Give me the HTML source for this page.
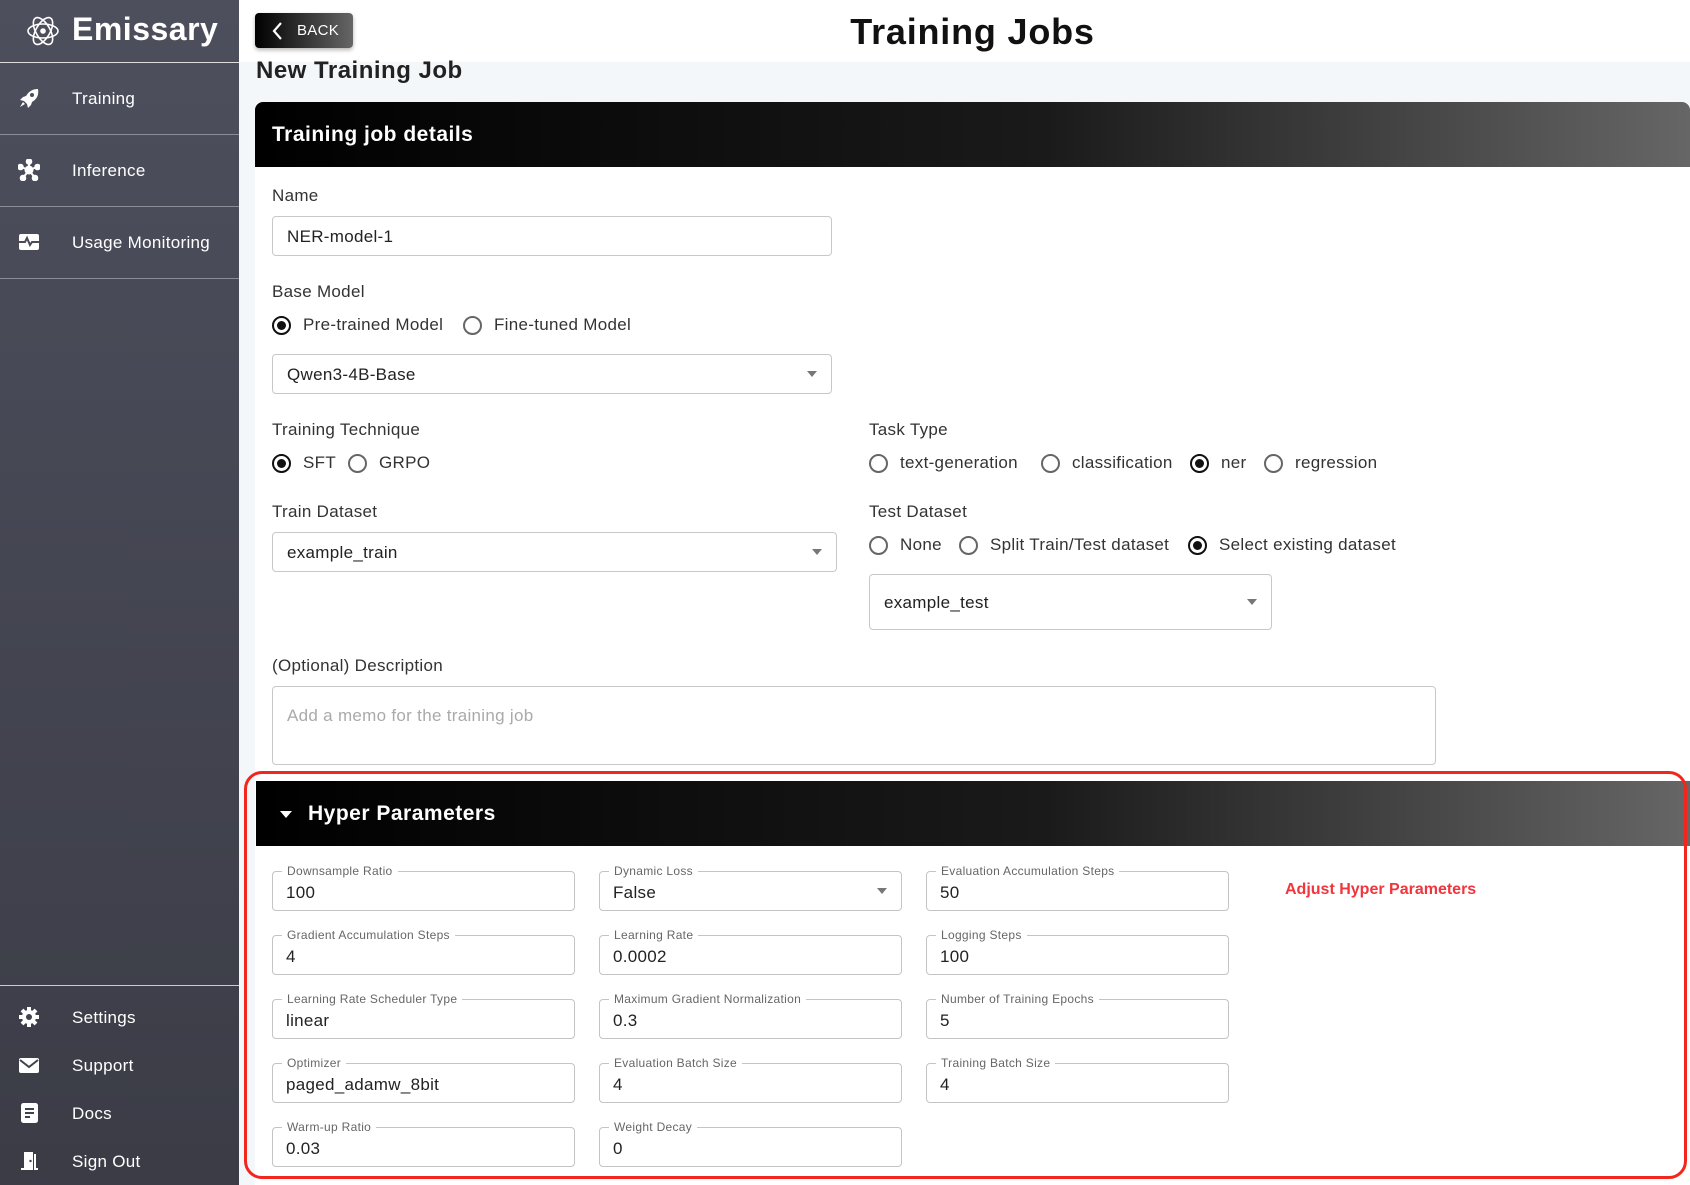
<!DOCTYPE html>
<html><head><meta charset="utf-8"><style>
*{box-sizing:border-box;margin:0;padding:0}
body{width:1690px;height:1185px;overflow:hidden;font-family:"Liberation Sans",sans-serif;background:#f4f7fa;position:relative;color:#222;letter-spacing:.3px}
.a{position:absolute}
#sb{left:0;top:0;width:239px;height:1185px;background:linear-gradient(#4d4f5d,#3b3c46)}
.nav{position:absolute;left:72px;color:#fff;font-size:17px;transform:translateY(-50%);margin-top:1px}
.ic{position:absolute;left:18px;width:22px;height:22px;transform:translateY(-50%)}
.hr{position:absolute;left:0;width:239px;height:1px;background:#8a8c96}
.lbl{position:absolute;font-size:17px;color:#333;transform:translateY(-50%);margin-top:1px}
.in{position:absolute;border:1px solid #c8c8c8;border-radius:4px;background:#fff;font-size:17px;color:#222;padding-left:14px;padding-top:2px;display:flex;align-items:center}
.caret{position:absolute;right:14px;top:50%;margin-top:-3px;border-left:5px solid transparent;border-right:5px solid transparent;border-top:6px solid #777}
.r{position:absolute;transform:translateY(-50%);margin-top:1px;display:flex;align-items:center;font-size:17px;color:#333;white-space:nowrap}
.rb{width:19px;height:19px;border:2px solid #666;border-radius:50%;margin-right:12px;position:relative;background:#fff}
.rb.on{border-color:#111}
.rb.on::after{content:"";position:absolute;left:3px;top:3px;width:9px;height:9px;border-radius:50%;background:#111}
.hf{position:absolute;width:303px;height:40px;border:1px solid #c4c4c4;border-radius:4px;background:#fff}
.hf span{position:absolute;left:9px;top:-8px;background:#fff;padding:0 5px;font-size:12px;color:#666;line-height:14px}
.hf b{position:absolute;left:13px;top:11px;font-weight:normal;font-size:17px;color:#222}
</style></head><body>
<div class="a" id="sb"></div>
<svg class="a" style="left:26px;top:14px" width="34" height="34" viewBox="0 0 34 34" fill="none" stroke="#fff" stroke-width="1.6"><ellipse cx="17" cy="17" rx="15" ry="7"/><ellipse cx="17" cy="17" rx="15" ry="7" transform="rotate(60 17 17)"/><ellipse cx="17" cy="17" rx="15" ry="7" transform="rotate(120 17 17)"/><circle cx="17" cy="17" r="2" fill="#fff"/></svg>
<div class="a" style="left:72px;top:11px;color:#fff;font-size:32px;font-weight:bold;letter-spacing:.5px">Emissary</div>
<div class="hr" style="top:62px;background:#ddd"></div>
<svg class="ic" style="top:98px" viewBox="0 0 22 22" fill="#fff"><path d="M20 2c-5 0-9 2-12 7l-3 1-3 3 4 1 3 3 1 4 3-3 1-3c5-3 7-7 6-13zM14 6a2 2 0 1 1 0 4 2 2 0 0 1 0-4zM5 15l-3 5 5-3z"/></svg>
<div class="nav" style="top:98px">Training</div>
<div class="hr" style="top:134px"></div>
<svg class="ic" style="top:170px" viewBox="0 0 22 22" fill="#fff" stroke="#fff" stroke-width="2"><circle cx="11" cy="11" r="3.5"/><circle cx="11" cy="2.5" r="2.3"/><circle cx="2.5" cy="8" r="2.3"/><circle cx="19.5" cy="8" r="2.3"/><circle cx="5" cy="19" r="2.3"/><circle cx="17" cy="19" r="2.3"/><path d="M11 11V3M11 11L3 8M11 11l8-3M11 11l-6 8M11 11l6 8"/></svg>
<div class="nav" style="top:170px">Inference</div>
<div class="hr" style="top:206px"></div>
<svg class="ic" style="top:242px" viewBox="0 0 22 22"><rect x="1" y="3" width="20" height="16" rx="2" fill="#fff"/><path d="M1 11h6l2-4 3 7 2-3h7" stroke="#4a4c59" stroke-width="2" fill="none"/></svg>
<div class="nav" style="top:242px">Usage Monitoring</div>
<div class="hr" style="top:278px"></div>
<div class="hr" style="top:985px;background:#ccc"></div>
<svg class="ic" style="top:1017px" viewBox="0 0 22 22"><circle cx="11" cy="11" r="7" fill="#fff"/><g stroke="#fff" stroke-width="4"><path d="M11 1v20M1 11h20M4 4l14 14M18 4L4 18"/></g><circle cx="11" cy="11" r="3" fill="#41424d"/></svg>
<div class="nav" style="top:1017px">Settings</div>
<svg class="ic" style="top:1065px" viewBox="0 0 22 22"><rect x="1" y="4" width="20" height="15" rx="2" fill="#fff"/><path d="M2 6l9 7 9-7" stroke="#41424d" stroke-width="2" fill="none"/></svg>
<div class="nav" style="top:1065px">Support</div>
<svg class="ic" style="top:1113px" viewBox="0 0 22 22"><rect x="3" y="1" width="17" height="20" rx="2.5" fill="#fff"/><path d="M7 7h9M7 11h9M7 15h5" stroke="#40414b" stroke-width="2"/></svg>
<div class="nav" style="top:1113px">Docs</div>
<svg class="ic" style="top:1161px" viewBox="0 0 22 22" fill="#fff"><rect x="6" y="2" width="9" height="18"/><rect x="16" y="4" width="2" height="16"/><rect x="16" y="18" width="4" height="2"/><rect x="3" y="18" width="4" height="2"/><circle cx="12.5" cy="11" r="1.2" fill="#3d3e48"/></svg>
<div class="nav" style="top:1161px">Sign Out</div>

<div class="a" style="left:239px;top:0;width:1451px;height:62px;background:#fff"></div>
<div class="a" style="left:255px;top:13px;width:98px;height:35px;border-radius:4px;background:linear-gradient(90deg,#000,#666);box-shadow:0 2px 4px rgba(0,0,0,.3);color:#fff;font-size:15px;display:flex;align-items:center;padding-left:42px">BACK</div>
<svg class="a" style="left:272px;top:21px" width="12" height="20" viewBox="0 0 12 20"><path d="M9 2L2 10l7 8" stroke="#fff" stroke-width="2.2" fill="none"/></svg>
<div class="a" style="left:0;width:1945px;top:11px;text-align:center;font-size:36px;font-weight:bold;color:#111;letter-spacing:.8px">Training Jobs</div>
<div class="a" style="left:256px;top:57px;font-size:24px;font-weight:bold;color:#222;letter-spacing:.5px">New Training Job</div>

<div class="a" style="left:255px;top:102px;width:1435px;height:1083px;background:#fff;border-radius:6px 6px 0 0"></div>
<div class="a" style="left:255px;top:102px;width:1435px;height:65px;border-radius:8px 8px 0 0;background:linear-gradient(90deg,#000 0%,#1a1a1a 55%,#666 100%)"></div>
<div class="a" style="left:272px;top:123px;color:#fff;font-size:21px;font-weight:bold;letter-spacing:.5px">Training job details</div>

<div class="lbl" style="left:272px;top:195px">Name</div>
<div class="in" style="left:272px;top:216px;width:560px;height:40px">NER-model-1</div>
<div class="lbl" style="left:272px;top:291px">Base Model</div>
<div class="r" style="left:272px;top:324px"><i class="rb on"></i>Pre-trained Model</div>
<div class="r" style="left:463px;top:324px"><i class="rb"></i>Fine-tuned Model</div>
<div class="in" style="left:272px;top:354px;width:560px;height:40px">Qwen3-4B-Base<i class="caret"></i></div>

<div class="lbl" style="left:272px;top:429px">Training Technique</div>
<div class="r" style="left:272px;top:462px"><i class="rb on"></i>SFT</div>
<div class="r" style="left:348px;top:462px"><i class="rb"></i>GRPO</div>
<div class="lbl" style="left:869px;top:429px">Task Type</div>
<div class="r" style="left:869px;top:462px"><i class="rb"></i>text-generation</div>
<div class="r" style="left:1041px;top:462px"><i class="rb"></i>classification</div>
<div class="r" style="left:1190px;top:462px"><i class="rb on"></i>ner</div>
<div class="r" style="left:1264px;top:462px"><i class="rb"></i>regression</div>

<div class="lbl" style="left:272px;top:511px">Train Dataset</div>
<div class="in" style="left:272px;top:532px;width:565px;height:40px">example_train<i class="caret"></i></div>
<div class="lbl" style="left:869px;top:511px">Test Dataset</div>
<div class="r" style="left:869px;top:544px"><i class="rb"></i>None</div>
<div class="r" style="left:959px;top:544px"><i class="rb"></i>Split Train/Test dataset</div>
<div class="r" style="left:1188px;top:544px"><i class="rb on"></i>Select existing dataset</div>
<div class="in" style="left:869px;top:574px;width:403px;height:56px">example_test<i class="caret"></i></div>

<div class="lbl" style="left:272px;top:665px">(Optional) Description</div>
<div class="in" style="left:272px;top:686px;width:1164px;height:79px;align-items:flex-start;padding-top:19px;color:#aaa">Add a memo for the training job</div>

<div class="a" style="left:256px;top:781px;width:1434px;height:65px;background:linear-gradient(90deg,#000 0%,#1a1a1a 55%,#666 100%)"></div>
<div class="a" style="left:280px;top:811px;border-left:6px solid transparent;border-right:6px solid transparent;border-top:7px solid #fff"></div>
<div class="a" style="left:308px;top:802px;color:#fff;font-size:21px;font-weight:bold;letter-spacing:.5px">Hyper Parameters</div>

<div class="hf" style="left:272px;top:871px"><span>Downsample Ratio</span><b>100</b></div>
<div class="hf" style="left:599px;top:871px"><span>Dynamic Loss</span><b>False</b><i class="caret"></i></div>
<div class="hf" style="left:926px;top:871px"><span>Evaluation Accumulation Steps</span><b>50</b></div>
<div class="hf" style="left:272px;top:935px"><span>Gradient Accumulation Steps</span><b>4</b></div>
<div class="hf" style="left:599px;top:935px"><span>Learning Rate</span><b>0.0002</b></div>
<div class="hf" style="left:926px;top:935px"><span>Logging Steps</span><b>100</b></div>
<div class="hf" style="left:272px;top:999px"><span>Learning Rate Scheduler Type</span><b>linear</b></div>
<div class="hf" style="left:599px;top:999px"><span>Maximum Gradient Normalization</span><b>0.3</b></div>
<div class="hf" style="left:926px;top:999px"><span>Number of Training Epochs</span><b>5</b></div>
<div class="hf" style="left:272px;top:1063px"><span>Optimizer</span><b>paged_adamw_8bit</b></div>
<div class="hf" style="left:599px;top:1063px"><span>Evaluation Batch Size</span><b>4</b></div>
<div class="hf" style="left:926px;top:1063px"><span>Training Batch Size</span><b>4</b></div>
<div class="hf" style="left:272px;top:1127px"><span>Warm-up Ratio</span><b>0.03</b></div>
<div class="hf" style="left:599px;top:1127px"><span>Weight Decay</span><b>0</b></div>

<div class="a" style="left:1285px;top:881px;color:#f0353d;font-size:16px;font-weight:bold;letter-spacing:0">Adjust Hyper Parameters</div>
<div class="a" style="left:244px;top:771px;width:1443px;height:408px;border:3px solid #f2261c;border-radius:18px"></div>
</body></html>
